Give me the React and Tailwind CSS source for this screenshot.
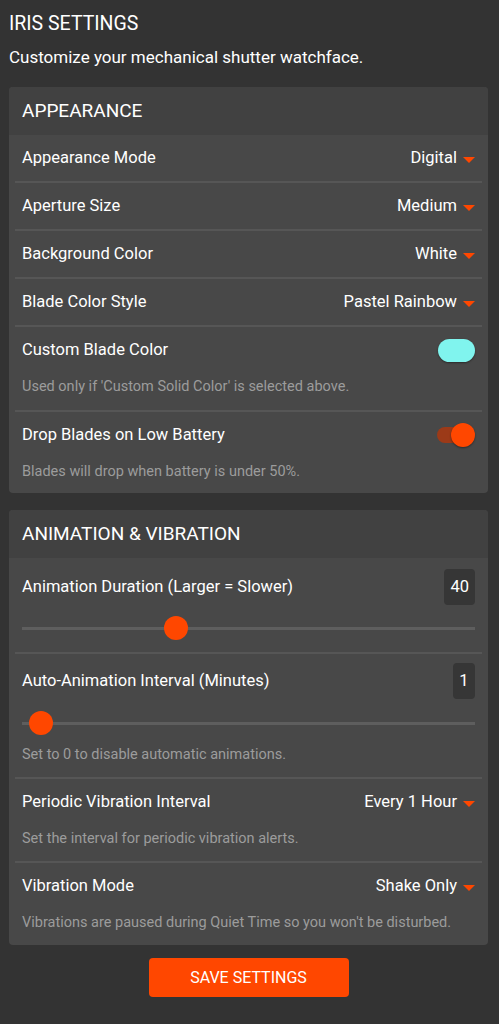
const font = { fontFamily: 'Roboto, "Liberation Sans", sans-serif' };

function Caret() {
    return (
        <svg width="12" height="6" viewBox="0 0 12 6" className="ml-[6px] mt-[3px]">
            <polygon points="0,0 12,0 6,6" fill="#ff4700" />
        </svg>
    );
}

function Card({ title, children }) {
    return (
        <div className="rounded-[4px] overflow-hidden bg-[#484848]">
            <div className="h-[48px] bg-[#414141] flex items-center px-[13px] text-[19px] text-white">{title}</div>
            <div className="px-[6px]">{children}</div>
        </div>
    );
}

function Desc({ children }) {
    return <p className="mt-[4px] text-[14.5px] leading-[20px] text-[#9c9c9c]">{children}</p>;
}

function SelectRow({ label, value, desc, first, last }) {
    return (
        <div className={`px-[7px] ${first ? '' : 'border-t-2 border-[#565656]'} ${desc ? (last ? 'pb-[12px]' : 'pb-[12px]') : ''}`}>
            <div className="h-[46px] flex items-center justify-between text-[16.5px] text-white">
                <span>{label}</span>
                <span className="flex items-center">{value}<Caret /></span>
            </div>
            {desc && <Desc>{desc}</Desc>}
        </div>
    );
}

function SliderRow({ label, value, pct, desc, first }) {
    return (
        <div className={`px-[7px] ${first ? 'pt-[11px] pb-[12px]' : 'pt-[9px] pb-[12px] border-t-2 border-[#565656]'}`}>
            <div className="h-9 flex items-center justify-between text-[16.5px] text-white">
                <span>{label}</span>
                <span className="h-9 min-w-[22px] px-[6px] rounded-[4px] bg-[#363636] flex items-center justify-center">{value}</span>
            </div>
            <div className={`relative h-[24px] flex items-center ${first ? 'mt-[11px]' : 'mt-[12px]'}`}>
                <div className="w-full h-[3px] bg-[#5e5e5e]" />
                <div className="absolute w-[24px] h-[24px] rounded-full bg-[#ff4700] -translate-x-1/2"
                    style={{ left: `calc(12px + (100% - 24px) * ${pct})` }} />
            </div>
            {desc && <div className="mt-[10px]"><Desc>{desc}</Desc></div>}
        </div>
    );
}

export default function App() {
    return (
        <div className="min-h-[1024px] bg-[#333333] pl-[9px] pr-[11px] pt-[10px] pb-[27px]" style={font}>
            <h1 className="text-[19.5px] leading-[28px] text-white">IRIS SETTINGS</h1>
            <p className="mt-[8px] text-[17px] leading-[22px] text-white">Customize your mechanical shutter watchface.</p>

            <div className="mt-[19px]">
                <Card title="APPEARANCE">
                    <SelectRow first label="Appearance Mode" value="Digital" />
                    <SelectRow label="Aperture Size" value="Medium" />
                    <SelectRow label="Background Color" value="White" />
                    <SelectRow label="Blade Color Style" value="Pastel Rainbow" />

                    <div className="px-[7px] pb-[13px] border-t-2 border-[#565656]">
                        <div className="h-[46px] flex items-center justify-between text-[16.5px] text-white">
                            <span>Custom Blade Color</span>
                            <span className="w-[37px] h-[23px] rounded-full bg-[#80f4ee] shadow-[0_1px_2px_rgba(0,0,0,0.4)]" />
                        </div>
                        <Desc>Used only if 'Custom Solid Color' is selected above.</Desc>
                    </div>

                    <div className="px-[7px] pb-[11px] border-t-2 border-[#565656]">
                        <div className="h-[46px] flex items-center justify-between text-[16.5px] text-white">
                            <span>Drop Blades on Low Battery</span>
                            <span className="relative w-[38px] h-[24px] flex items-center">
                                <span className="w-[30px] h-[16px] rounded-full bg-[#9c3a18]" />
                                <span className="absolute right-0 w-[24px] h-[24px] rounded-full bg-[#ff4700] shadow-[0_1px_2px_rgba(0,0,0,0.4)]" />
                            </span>
                        </div>
                        <Desc>Blades will drop when battery is under 50%.</Desc>
                    </div>
                </Card>
            </div>

            <div className="mt-[17px]">
                <Card title="ANIMATION & VIBRATION">
                    <SliderRow first label="Animation Duration (Larger = Slower)" value="40" pct={0.33} />
                    <SliderRow label="Auto-Animation Interval (Minutes)" value="1" pct={0.016}
                        desc="Set to 0 to disable automatic animations." />
                    <SelectRow label="Periodic Vibration Interval" value="Every 1 Hour"
                        desc="Set the interval for periodic vibration alerts." />
                    <SelectRow last label="Vibration Mode" value="Shake Only"
                        desc="Vibrations are paused during Quiet Time so you won't be disturbed." />
                </Card>
            </div>

            <div className="mt-[13px] flex justify-center">
                <button className="w-[200px] h-[39px] rounded-[4px] bg-[#ff4700] text-white text-[16px]">SAVE SETTINGS</button>
            </div>
        </div>
    );
}
